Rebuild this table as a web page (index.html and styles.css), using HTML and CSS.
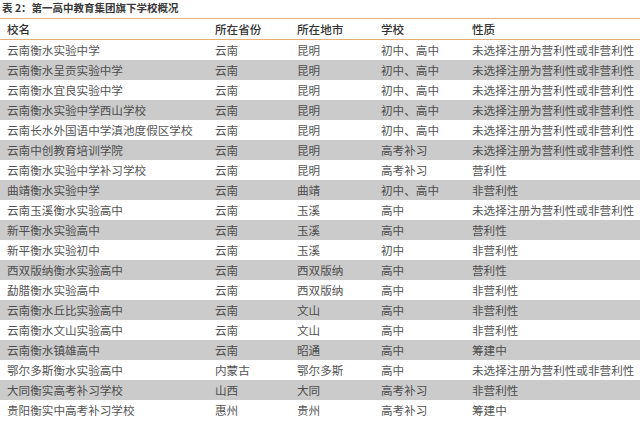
FILE: index.html
```html
<!DOCTYPE html>
<html lang="zh">
<head>
<meta charset="utf-8">
<link rel="stylesheet" href="styles.css">
</head>
<body>
<div class="title">表 2：第一高中教育集团旗下学校概况</div>
<div class="table">
  <div class="row head"><span>校名</span><span>所在省份</span><span>所在地市</span><span>学校</span><span>性质</span></div>
  <div class="row"><span>云南衡水实验中学</span><span>云南</span><span>昆明</span><span>初中、高中</span><span>未选择注册为营利性或非营利性</span></div>
  <div class="row alt"><span>云南衡水呈贡实验中学</span><span>云南</span><span>昆明</span><span>初中、高中</span><span>未选择注册为营利性或非营利性</span></div>
  <div class="row"><span>云南衡水宜良实验中学</span><span>云南</span><span>昆明</span><span>初中、高中</span><span>未选择注册为营利性或非营利性</span></div>
  <div class="row alt"><span>云南衡水实验中学西山学校</span><span>云南</span><span>昆明</span><span>初中、高中</span><span>未选择注册为营利性或非营利性</span></div>
  <div class="row"><span>云南长水外国语中学滇池度假区学校</span><span>云南</span><span>昆明</span><span>初中、高中</span><span>未选择注册为营利性或非营利性</span></div>
  <div class="row alt"><span>云南中创教育培训学院</span><span>云南</span><span>昆明</span><span>高考补习</span><span>未选择注册为营利性或非营利性</span></div>
  <div class="row"><span>云南衡水实验中学补习学校</span><span>云南</span><span>昆明</span><span>高考补习</span><span>营利性</span></div>
  <div class="row alt"><span>曲靖衡水实验中学</span><span>云南</span><span>曲靖</span><span>初中、高中</span><span>非营利性</span></div>
  <div class="row"><span>云南玉溪衡水实验高中</span><span>云南</span><span>玉溪</span><span>高中</span><span>未选择注册为营利性或非营利性</span></div>
  <div class="row alt"><span>新平衡水实验高中</span><span>云南</span><span>玉溪</span><span>高中</span><span>营利性</span></div>
  <div class="row"><span>新平衡水实验初中</span><span>云南</span><span>玉溪</span><span>初中</span><span>非营利性</span></div>
  <div class="row alt"><span>西双版纳衡水实验高中</span><span>云南</span><span>西双版纳</span><span>高中</span><span>营利性</span></div>
  <div class="row"><span>勐腊衡水实验高中</span><span>云南</span><span>西双版纳</span><span>高中</span><span>非营利性</span></div>
  <div class="row alt"><span>云南衡水丘比实验高中</span><span>云南</span><span>文山</span><span>高中</span><span>非营利性</span></div>
  <div class="row"><span>云南衡水文山实验高中</span><span>云南</span><span>文山</span><span>高中</span><span>非营利性</span></div>
  <div class="row alt"><span>云南衡水镇雄高中</span><span>云南</span><span>昭通</span><span>高中</span><span>筹建中</span></div>
  <div class="row"><span>鄂尔多斯衡水实验高中</span><span>内蒙古</span><span>鄂尔多斯</span><span>高中</span><span>未选择注册为营利性或非营利性</span></div>
  <div class="row alt"><span>大同衡实高考补习学校</span><span>山西</span><span>大同</span><span>高考补习</span><span>非营利性</span></div>
  <div class="row"><span>贵阳衡实中高考补习学校</span><span>惠州</span><span>贵州</span><span>高考补习</span><span>筹建中</span></div>
</div>
</body>
</html>
```
FILE: styles.css
```css
html, body {
  margin: 0;
  padding: 0;
  background: #ffffff;
}
body {
  width: 640px;
  height: 421px;
  overflow: hidden;
  font-family: "Noto Sans CJK SC", "Noto Sans", sans-serif;
}
.title {
  height: 18px;
  line-height: 16px;
  padding-left: 2px;
  font-size: 10.5px;
  font-weight: 700;
  color: #3a3a3a;
}
.table {
  border-top: 1px solid #e3ae78;
}
.row {
  display: grid;
  grid-template-columns: 208px 82px 84px 91px 1fr;
  height: 20px;
  line-height: 20px;
  padding-left: 7px;
  font-size: 11.6px;
  color: #555555;
  white-space: nowrap;
}
.row.head {
  color: #333333;
  font-weight: 500;
  border-bottom: 1px solid #e3ae78;
}
.row.alt {
  background: #cbcbcb;
  color: #4d4d4d;
}
```
